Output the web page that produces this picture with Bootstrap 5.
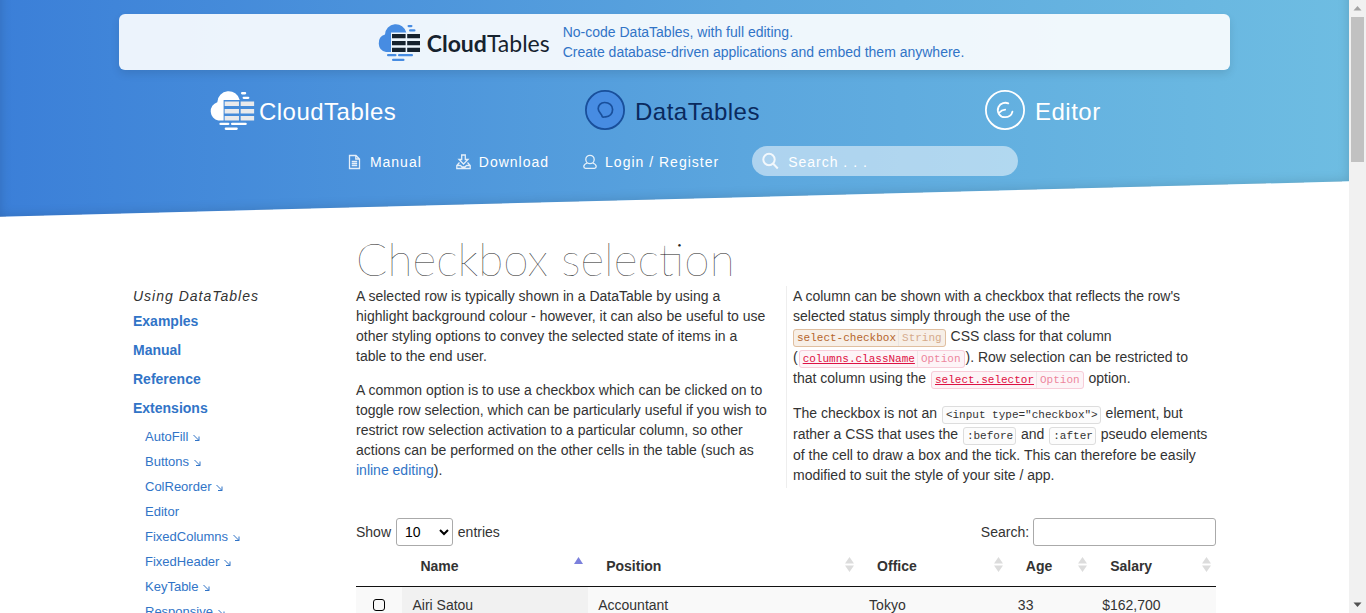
<!DOCTYPE html>
<html lang="en">
<head>
<meta charset="utf-8">
<meta name="viewport" content="width=device-width, initial-scale=1">
<title>DataTables example - Checkbox selection</title>
<link href="https://cdn.jsdelivr.net/npm/bootstrap@5.3.0/dist/css/bootstrap.min.css" rel="stylesheet">
<style>
  body { font: 14px/20px "Liberation Sans", Arial, sans-serif; color: #333; background: #fff; }
  a { color: #3174c7; text-decoration: none; }
  .page { scrollbar-width: none; min-width: 0; }
  .page::-webkit-scrollbar { display: none; }
  .wrap { width: 100%; max-width: 1111px; margin: 0 auto; }

  /* slanted header */
  .masthead { height: 200px; padding-top: 14px; position: relative; z-index: 0; }
  .masthead::before {
    content: ""; position: absolute; z-index: -1; inset: -60px 0 1px;
    transform: skewY(-1.5deg);
    background: linear-gradient(to right, #3b7fd8, #5ba6de 55%, #6ebde2);
    box-shadow: inset 0 0 12px rgba(0, 0, 0, .15);
  }
  .promo { height: 56px; padding-right: 8px; border-radius: 6px; background: rgba(255, 255, 255, .9); box-shadow: 0 4px 8px rgba(0, 0, 0, .1); color: #3174c7; }
  .promo-name { font: 400 23px/28px Lato, sans-serif; color: #16222e; padding-top: 2px; margin: 0 13px 0 7px; }
  .brands { padding-top: 20px; }
  .brands a { font-size: 24px; line-height: 40px; color: #fff; letter-spacing: .02em; }
  .brands a.current { color: #0a2a5e; }
  .brands span { padding-top: 3px; }
  .brands a { height: 40px; }
  .topnav { padding-top: 16px; }
  .topnav a { color: #fff; letter-spacing: 1px; padding: 2px 17px 0; }
  .topnav svg { opacity: .85; }
  .site-search { width: 266px; height: 30px; border-radius: 15px; background: rgba(255, 255, 255, .5); padding: 0 10px; margin-left: 16px; }
  .site-search input { border: 0; background: none; color: #fff; letter-spacing: 1px; outline: 0; min-width: 0; padding: 2px 0 0; }
  .site-search input::placeholder { color: #fff; opacity: 1; }

  /* page body */
  .body-grid { display: grid; grid-template-columns: 223px minmax(0, 1fr); padding: 36px 14px 0; }
  .side { padding-top: 50px; }
  .side-title { font-style: italic; letter-spacing: 1px; margin-bottom: 5px; }
  .side-main > li > a { font-weight: 700; display: block; margin-bottom: 9px; }
  .side-sub { font-size: 13px; padding-left: 12px; }
  .side-sub li { height: 25px; }
  h1 { font: 100 46px/46px Lato, sans-serif; margin: 0 0 4px; color: #222; }
  .intro { display: grid; grid-template-columns: 1fr 1fr; }
  .intro p { margin-bottom: 14px; }
  .intro p:last-child { margin-bottom: 3px; }
  .intro > div { padding-right: 16px; }
  .intro > div + div { border-left: 1px solid #eee; padding: 0 6px; }
  .intro code { font: 11px/18px "Liberation Mono", monospace; color: #333; background: #fcfcfc; border: 1px solid #ddd; border-radius: 3px; padding: 2px 2px 2px 3px; margin: 0 1px; white-space: nowrap; }
  .intro code a { color: #d14; text-decoration: underline; }
  .intro code span { border-left: 1px solid #ddd; margin-left: 2px; padding: 2px 1px 2px 3px; opacity: .5; }
  .intro code.api { color: #d14; background: #fdf4f7; border-color: #f7cdd9; }
  .intro code.css-class { color: #b5652b; background: #f7efe7; border-color: #e0bfa0; margin-left: 0; }

  .controls { padding-top: 30px; }
  .controls select, .controls input { height: 28px; border: 1px solid #aaa; border-radius: 3px; background: #fff; padding: 4px; color: #000; }
  .controls input { width: 183px; }
  .controls select { width: 57px; margin: 0 1px; }
  .grid-table { width: 100%; table-layout: fixed; border-collapse: collapse; margin-top: 1px; }
  .grid-table th { padding: 9px 18px 10px; border-bottom: 1px solid #111; position: relative; }
  .grid-table td { padding: 8px 10px; background: #f9f9f9; }
  .grid-table td.sorted { background: #f1f1f1; }
  .grid-table th svg { position: absolute; right: 5px; top: 10px; }
  .grid-table input { width: 12px; height: 12px; margin: 0; border: 1px solid #000; border-radius: 3px; appearance: none; display: block; margin: auto; }

  /* window scrollbar */
  .scroll-track { width: 17px; flex: none; background: #f1f1f1; }
  .scroll-thumb { width: 13px; height: 145px; background: #c1c1c1; }
</style>
</head>
<body>
<svg class="d-none" xmlns="http://www.w3.org/2000/svg">
  <symbol id="cloud" viewBox="0 0 43 38">
    <path fill="currentColor" d="M9 29a9 9 0 0 1-1-17.400A10.800 10.800 0 0 1 29.300 9.500H14V29z"/>
    <g fill="currentColor"><rect x="30.500" y="2" width="5" height="2.200" rx="1.100"/><rect x="32" y="6.300" width="6.500" height="2.200" rx="1.100"/>
    <rect x="10" y="31" width="9.500" height="2.300" rx="1.100"/><rect x="21" y="31" width="15" height="2.300" rx="1.100"/><rect x="15" y="35.700" width="12.500" height="2.300" rx="1.100"/></g>
    <path fill="var(--cells)" d="M15 11h13.600v4.300H15zM30.200 11H43v4.300H30.200zM15 18h13.600v4.300H15zM30.200 18H43v4.300H30.200zM15 24.700h13.600V29H15zM30.200 24.700H43V29H30.200z"/>
  </symbol>
  <symbol id="jump" viewBox="0 0 8 8"><path d="M1 1l5.500 5.500M6.500 2.500v4h-4" fill="none" stroke="#3174c7"/></symbol>
  <symbol id="both" viewBox="0 0 9 15"><path d="M4.500 0L9 6.500H0zM4.500 15L9 8.500H0z" fill="#dcdcdc"/></symbol>
</svg>

<div class="d-flex vh-100 overflow-hidden">
  <div class="page flex-grow-1 overflow-auto">
    <header class="masthead">
      <div class="wrap">
        <a href="#" class="promo d-flex justify-content-center align-items-center">
          <svg width="43" height="38" style="--cells:#16222e;color:#478ce2" aria-hidden="true"><use href="#cloud"/></svg>
          <span class="promo-name"><b>Cloud</b>Tables</span>
          <span>No-code DataTables, with full editing.<br>Create database-driven applications and embed them anywhere.</span>
        </a>
        <nav class="brands row g-0 text-center" aria-label="Products">
          <div class="col d-flex justify-content-center pe-1"><a href="#" class="d-flex align-items-center gap-1">
            <svg width="47" height="40" style="--cells:#e9eaec" aria-hidden="true"><use href="#cloud"/></svg><span>CloudTables</span></a></div>
          <div class="col d-flex justify-content-center pe-1"><a href="#" class="current d-flex align-items-center">
            <svg class="me-2" width="42" height="40" viewBox="0 0 42 40" aria-hidden="true"><circle cx="20" cy="20" r="19.100" fill="#478ce2" stroke="#194f9b" stroke-width="1.800"/><path d="M17.300 26.800C16.800 24 13.200 22 13.200 18.800c0-3.300 2.500-6.200 6.300-6.300 4.600-.1 8.100 2.900 8.100 7 0 4.200-3 7.300-6.900 7.300-1.300 0-2.700.8-3.400 0z" fill="none" stroke="#194f9b" stroke-width="1.700"/></svg><span>DataTables</span></a></div>
          <div class="col d-flex justify-content-center pe-1"><a href="#" class="d-flex align-items-center">
            <svg class="me-2" width="42" height="40" viewBox="0 0 42 40" aria-hidden="true"><circle cx="20" cy="20" r="19.100" fill="none" stroke="#fff" stroke-width="1.800"/><path d="M23.300 13.300c-3-1.200-7.800-.6-9.800 3.700-2.200 5 1.200 10 6.200 10.200 4 .2 7-2.400 7.700-5.500M14.500 22.500c1.300-1.700 3.500-2.700 5.700-2.900" fill="none" stroke="#fff" stroke-width="1.800" stroke-linecap="round"/></svg><span>Editor</span></a></div>
        </nav>
        <div class="topnav d-flex justify-content-center align-items-center">
          <a href="#" class="d-flex align-items-center"><svg class="me-2" width="14" height="16" viewBox="0 0 14 16" fill="none" stroke="#fff" stroke-width="1.300" aria-hidden="true"><path d="M1.500 1.500h6.500l3.500 3.500v9.500h-10zM7.800 1.500V5h3.500M3.700 7.500h5.500M3.700 9.500h5.500M3.700 11.500h5.500"/></svg>Manual</a>
          <a href="#" class="d-flex align-items-center"><svg class="me-2" width="15" height="16" viewBox="0 0 15 16" fill="none" stroke="#fff" stroke-width="1.300" aria-hidden="true"><path d="M5.700 1h3.600v4.500h2.700L7.500 10 3 5.500h2.700zM3.500 8.500l-2.700 3v3h13.400v-3l-2.700-3M.8 11.500h3.700l1.500 1.500h3l1.500-1.500h3.700"/></svg>Download</a>
          <a href="#" class="d-flex align-items-center"><svg class="me-2" width="14" height="16" viewBox="0 0 14 16" fill="none" stroke="#fff" stroke-width="1.300" aria-hidden="true"><circle cx="7" cy="5.500" r="4.200"/><path d="M4.300 9C2 9.800.8 11 .8 12.500c0 1.200.7 1.800 1.700 1.800h9c1 0 1.700-.6 1.700-1.800 0-1.500-1.200-2.700-3.500-3.500"/></svg>Login / Register</a>
          <label class="site-search d-flex align-items-center">
            <svg class="flex-shrink-0 me-2" width="18" height="18" viewBox="0 0 18 18" fill="none" stroke="#fff" stroke-width="2" aria-hidden="true"><circle cx="7" cy="7.500" r="5.700"/><path d="M11 11.500l4.800 5"/></svg>
            <input class="flex-grow-1" type="text" placeholder="Search . . ." aria-label="Search site">
          </label>
        </div>
      </div>
    </header>

    <div class="wrap body-grid">
      <nav class="side" aria-label="Using DataTables">
        <div class="side-title">Using DataTables</div>
        <ul class="side-main list-unstyled m-0">
          <li><a href="#">Examples</a></li>
          <li><a href="#">Manual</a></li>
          <li><a href="#">Reference</a></li>
          <li><a href="#">Extensions</a>
            <ul class="side-sub list-unstyled">
              <li><a href="#">AutoFill <svg width="9" height="8"><use href="#jump"/></svg></a></li>
              <li><a href="#">Buttons <svg width="9" height="8"><use href="#jump"/></svg></a></li>
              <li><a href="#">ColReorder <svg width="9" height="8"><use href="#jump"/></svg></a></li>
              <li><a href="#">Editor</a></li>
              <li><a href="#">FixedColumns <svg width="9" height="8"><use href="#jump"/></svg></a></li>
              <li><a href="#">FixedHeader <svg width="9" height="8"><use href="#jump"/></svg></a></li>
              <li><a href="#">KeyTable <svg width="9" height="8"><use href="#jump"/></svg></a></li>
              <li><a href="#">Responsive <svg width="9" height="8"><use href="#jump"/></svg></a></li>
            </ul>
          </li>
        </ul>
      </nav>

      <main>
        <h1>Checkbox selection</h1>
        <div class="intro">
          <div>
            <p>A selected row is typically shown in a DataTable by using a highlight background colour - however, it can also be useful to use other styling options to convey the selected state of items in a table to the end user.</p>
            <p>A common option is to use a checkbox which can be clicked on to toggle row selection, which can be particularly useful if you wish to restrict row selection activation to a particular column, so other actions can be performed on the other cells in the table (such as <a href="#">inline editing</a>).</p>
          </div>
          <div>
            <p>A column can be shown with a checkbox that reflects the row's selected status simply through the use of the <code class="css-class">select-checkbox<span>String</span></code> CSS class for that column (<code class="api"><a href="#">columns.className</a><span>Option</span></code>). Row selection can be restricted to that column using the <code class="api"><a href="#">select.selector</a><span>Option</span></code> option.</p>
            <p>The checkbox is not an <code>&lt;input type="checkbox"&gt;</code> element, but rather a CSS that uses the <code>:before</code> and <code>:after</code> pseudo elements of the cell to draw a box and the tick. This can therefore be easily modified to suit the style of your site / app.</p>
          </div>
        </div>

        <div class="controls d-flex justify-content-between">
          <label>Show <select><option>10</option><option>25</option><option>50</option><option>100</option></select> entries</label>
          <label>Search: <input type="search"></label>
        </div>
        <table class="grid-table">
          <colgroup><col style="width:5.4%"><col style="width:21.600%"><col style="width:31.500%"><col style="width:17.300%"><col style="width:9.800%"><col style="width:14.400%"></colgroup>
          <thead>
            <tr>
              <th></th>
              <th>Name<svg width="9" height="15" viewBox="0 0 9 15"><path d="M4.500 0L9 7H0z" fill="#7b80dc"/></svg></th>
              <th>Position<svg width="9" height="15"><use href="#both"/></svg></th>
              <th>Office<svg width="9" height="15"><use href="#both"/></svg></th>
              <th>Age<svg width="9" height="15"><use href="#both"/></svg></th>
              <th>Salary<svg width="9" height="15"><use href="#both"/></svg></th>
            </tr>
          </thead>
          <tbody>
            <tr><td><input type="checkbox" aria-label="Select Airi Satou"></td><td class="sorted">Airi Satou</td><td>Accountant</td><td>Tokyo</td><td>33</td><td>$162,700</td></tr>
          </tbody>
        </table>
      </main>
    </div>
  </div>
  <div class="scroll-track d-flex flex-column align-items-center" aria-hidden="true">
    <svg class="flex-shrink-0" width="17" height="17"><path d="M8.500 6l4 4.500h-8z" fill="#a3a3a3"/></svg>
    <div class="scroll-thumb"></div>
    <svg class="flex-shrink-0 mt-auto" width="17" height="17"><path d="M8.500 11l4-4.500h-8z" fill="#505050"/></svg>
  </div>
</div>
<script src="https://cdn.jsdelivr.net/npm/bootstrap@5.3.0/dist/js/bootstrap.bundle.min.js"></script>
</body>
</html>
